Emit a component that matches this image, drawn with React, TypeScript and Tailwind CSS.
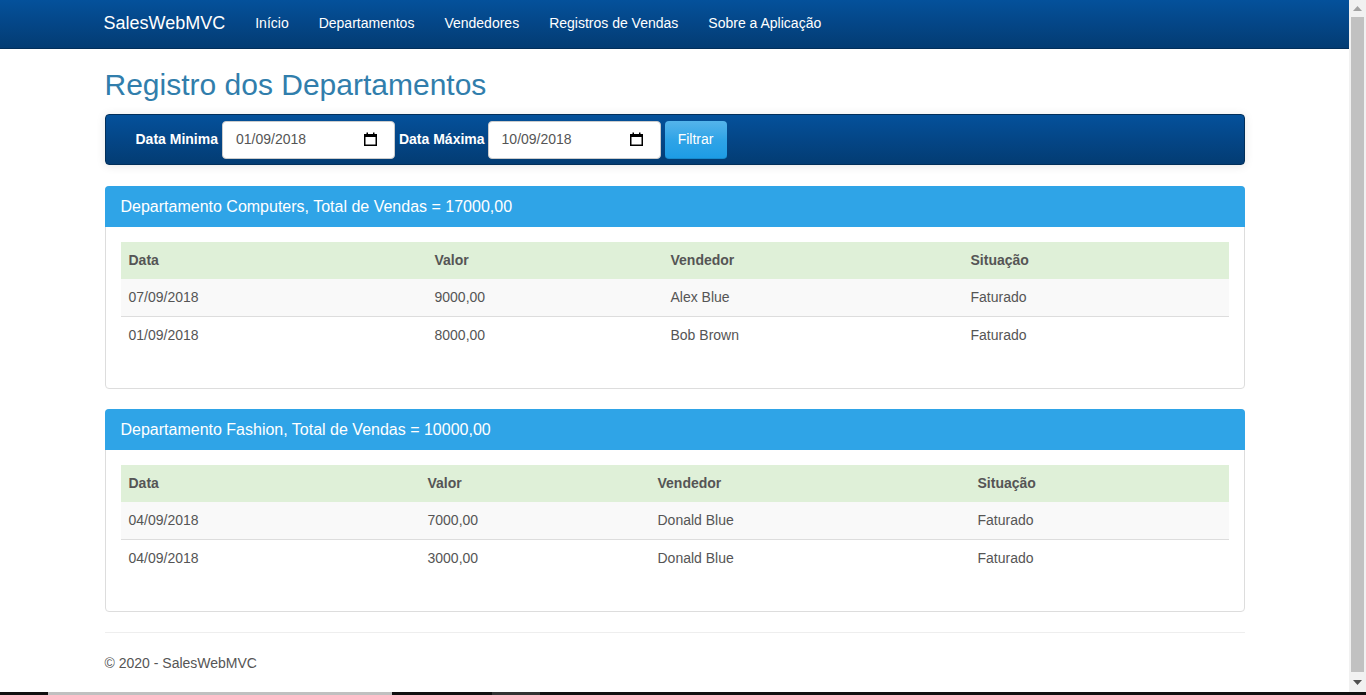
import React from "react";

const font = { fontFamily: '"Liberation Sans", Arial, sans-serif' };

function CalendarIcon() {
  return (
    <svg width="15" height="15" viewBox="0 0 15 15" className="shrink-0">
      <rect x="1.75" y="2.75" width="11.5" height="10.5" fill="none" stroke="#000" strokeWidth="1.5" />
      <rect x="1" y="2" width="13" height="3" fill="#000" />
      <rect x="3.5" y="0.5" width="1.5" height="2" fill="#000" />
      <rect x="10" y="0.5" width="1.5" height="2" fill="#000" />
    </svg>
  );
}

function DateBox({ value, width }: { value: string; width: string }) {
  return (
    <div
      className={`${width} h-[38px] bg-white rounded-[4px] border border-[#ccc] flex items-center pl-[13px] pr-[16px] justify-between text-[14px] text-[#555]`}
    >
      <span>{value}</span>
      <CalendarIcon />
    </div>
  );
}

type Row = { data: string; valor: string; vendedor: string; sit: string };

function Panel({
  title,
  cols,
  rows,
}: {
  title: string;
  cols: string;
  rows: Row[];
}) {
  return (
    <div className="border border-[#dddddd] rounded-[4px] bg-white">
      <div className="h-[41px] bg-[#2fa4e7] rounded-t-[4px] -mx-px -mt-px px-[16px] flex items-center text-white text-[16px]">
        {title}
      </div>
      <div className="px-[15px] pt-[15px] pb-[35px]">
        <div className={`grid ${cols} h-[37px] items-center bg-[#dff0d8] text-[#555] font-bold text-[14px]`}>
          <div className="px-2">Data</div>
          <div className="px-2">Valor</div>
          <div className="px-2">Vendedor</div>
          <div className="px-2">Situação</div>
        </div>
        {rows.map((r, i) => (
          <div
            key={i}
            className={`grid ${cols} h-[37px] items-center text-[#555] text-[14px] ${
              i % 2 === 0 ? "bg-[#f9f9f9]" : "bg-white"
            } ${i > 0 ? "border-t border-[#dddddd]" : ""}`}
          >
            <div className="px-2">{r.data}</div>
            <div className="px-2">{r.valor}</div>
            <div className="px-2">{r.vendedor}</div>
            <div className="px-2">{r.sit}</div>
          </div>
        ))}
      </div>
    </div>
  );
}

export default function App() {
  return (
    <div style={font} className="w-[1366px] h-[695px] overflow-hidden flex flex-col bg-white">
      <div className="flex flex-1 min-h-0">
        <div className="w-[1349px] flex flex-col">
          {/* Navbar */}
          <div className="h-[49px] bg-gradient-to-b from-[#04519b] via-[#044687] to-[#033c73] border-b border-[#022f5a] shrink-0">
            <div className="w-[1140px] mx-auto flex items-center h-full pb-[2px]">
              <div className="text-white text-[18px] pr-[15px] -ml-[1px]">SalesWebMVC</div>
              {["Início", "Departamentos", "Vendedores", "Registros de Vendas", "Sobre a Aplicação"].map((l) => (
                <div key={l} className="text-white text-[14px] px-[15px]">
                  {l}
                </div>
              ))}
            </div>
          </div>

          <div className="w-[1140px] mx-auto">
            <h2 className="mt-[19px] text-[30px] leading-[33px] text-[#317eac]">Registro dos Departamentos</h2>

            <div className="mt-[13px] h-[51px] rounded-[4px] bg-gradient-to-b from-[#04519b] via-[#044687] to-[#033c73] border border-[#022f5a] shadow-[0_1px_10px_rgba(0,0,0,0.1)] flex items-center pl-[30px]">
              <span className="text-white font-bold text-[14px] mr-[4px]">Data Minima</span>
              <DateBox value="01/09/2018" width="w-[173px]" />
              <span className="text-white font-bold text-[14px] ml-[4px] mr-[3px]">Data Máxima</span>
              <DateBox value="10/09/2018" width="w-[173px]" />
              <div className="ml-[4px] h-[38px] w-[62px] rounded-[4px] bg-gradient-to-b from-[#54b4eb] via-[#2fa4e7] to-[#1d9ce5] border-b border-[#178acc] text-white text-[14px] flex items-center justify-center">
                Filtrar
              </div>
            </div>

            <div className="mt-[21px]">
              <Panel
                title="Departamento Computers, Total de Vendas = 17000,00"
                cols="grid-cols-[306px_236px_300px_266px]"
                rows={[
                  { data: "07/09/2018", valor: "9000,00", vendedor: "Alex Blue", sit: "Faturado" },
                  { data: "01/09/2018", valor: "8000,00", vendedor: "Bob Brown", sit: "Faturado" },
                ]}
              />
            </div>
            <div className="mt-[20px]">
              <Panel
                title="Departamento Fashion, Total de Vendas = 10000,00"
                cols="grid-cols-[299px_230px_320px_259px]"
                rows={[
                  { data: "04/09/2018", valor: "7000,00", vendedor: "Donald Blue", sit: "Faturado" },
                  { data: "04/09/2018", valor: "3000,00", vendedor: "Donald Blue", sit: "Faturado" },
                ]}
              />
            </div>

            <div className="mt-[20px] border-t border-[#eeeeee]" />
            <div className="mt-[20px] h-[20px] leading-[20px] text-[14px] text-[#555]">© 2020 - SalesWebMVC</div>
          </div>
        </div>

        {/* Fake scrollbar */}
        <div className="w-[17px] bg-[#f1f1f1] flex flex-col items-center">
          <div className="h-[17px] flex items-center justify-center">
            <svg width="9" height="5" viewBox="0 0 9 5">
              <polygon points="0,5 9,5 4.5,0" fill="#a3a3a3" />
            </svg>
          </div>
          <div className="flex-1 w-[13px] bg-[#c1c1c1] ml-[2px] mr-[2px]" />
          <div className="h-[20px] flex items-center justify-center">
            <svg width="9" height="5" viewBox="0 0 9 5">
              <polygon points="0,0 9,0 4.5,5" fill="#505050" />
            </svg>
          </div>
        </div>
      </div>

      {/* bottom strip */}
      <div className="h-[3px] flex shrink-0">
        <div className="w-[48px] bg-[#111]" />
        <div className="w-[344px] bg-[#c0c0c0]" />
        <div className="w-[100px] bg-[#111]" />
        <div className="w-[48px] bg-[#333]" />
        <div className="flex-1 bg-[#111]" />
      </div>
    </div>
  );
}
